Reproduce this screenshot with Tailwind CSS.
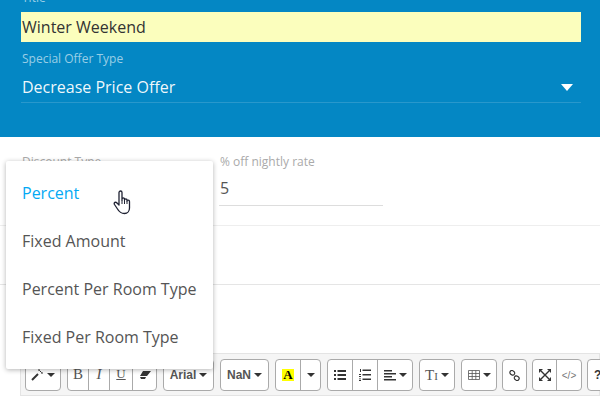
<!DOCTYPE html>
<html lang="en">
<head>
  <meta charset="UTF-8" />
  <script src="https://cdn.jsdelivr.net/npm/@tailwindcss/browser@4"></script>
  <title>Special Offer</title>
</head>
<body class="relative w-[600px] h-[400px] overflow-hidden bg-white font-['Open_Sans',sans-serif]">
  <!-- blue header -->
  <header class="h-[137px] bg-[#0487c4] pl-[21px] pr-[19px] overflow-hidden">
    <label class="block h-[12px] -mt-[12px] pl-[1px] text-[12px] leading-[20px] text-white/60">Title</label>
    <div class="h-[30px] mt-[12px] bg-[#fbfebd] pl-[1px] text-[16px] leading-[30px] text-[#333]">Winter Weekend</div>
    <label class="block mt-[8px] text-[12px] leading-[17px] text-white/60 pl-[1px]">Special Offer Type</label>
    <div class="flex items-center justify-between h-[36px] pt-[5px] pl-[1px] pr-[8px] border-b border-white/15 text-[16px] font-medium text-white/95">
      <span>Decrease Price Offer</span>
      <span class="w-0 h-0 mt-[1px] border-x-[6px] border-x-transparent border-t-[7px] border-t-white"></span>
    </div>
  </header>

  <!-- discount row -->
  <section class="flex h-[89px] border-b border-[#eee] pl-[22px] pt-[17px]">
    <div class="w-[197px] text-[12px] leading-[16px] text-[#aaa]">Discount Type</div>
    <div class="w-[164px]">
      <label class="block pl-[1px] text-[12px] leading-[16px] text-[#aaa]">% off nightly rate</label>
      <div class="h-[36px] pl-[1px] pt-[6px] border-b border-[#ddd] text-[16px] leading-[24px] text-[#555]">5</div>
    </div>
  </section>
  <div class="h-[59px] border-b border-[#e5e5e5]"></div>
  <div class="h-[68px]"></div>

  <!-- editor toolbar -->
  <div class="ml-[20px] h-[43px] bg-[#f5f5f5] border border-[#e4e4e4] flex *:shrink-0 pt-[5px] pl-[4px] text-[#333] font-['Liberation_Sans',sans-serif]">
    <div class="flex h-[32px] bg-white border border-[#aaa] rounded-[4px] w-[36px] items-center justify-center gap-[4px]">
      <svg width="12" height="12" viewBox="0 0 12 12"><path d="M1 11 L7 5" stroke="#333" stroke-width="2"/><path d="M8 0v2M10 4h2M8.500 1.500l2 2" stroke="#333" stroke-width="1" fill="none"/></svg>
      <span class="w-0 h-0 border-x-[4px] border-x-transparent border-t-[4px] border-t-[#333]"></span>
    </div>
    <div class="flex h-[32px] ml-[6px] bg-white border border-[#aaa] rounded-[4px] w-[90px] divide-x divide-[#aaa] text-center font-['Liberation_Serif',serif] text-[15px] leading-[28px] text-[#555]">
      <span class="w-[21px]">B</span>
      <span class="w-[21px] italic">I</span>
      <span class="w-[23px] underline text-[13px]">U</span>
      <span class="flex-1 flex items-center justify-center">
        <svg width="14" height="10" viewBox="0 0 14 10"><path d="M5 1h8L9 6H2zM2 7h6L7 9H3z" fill="#333"/></svg>
      </span>
    </div>
    <div class="flex h-[32px] ml-[6px] bg-white border border-[#aaa] rounded-[4px] w-[51px] items-center justify-center gap-[3px] text-[12px] font-bold text-[#555]">
      Arial<span class="w-0 h-0 border-x-[4px] border-x-transparent border-t-[4px] border-t-[#333]"></span>
    </div>
    <div class="flex h-[32px] ml-[6px] bg-white border border-[#aaa] rounded-[4px] w-[49px] items-center justify-center gap-[3px] text-[12px] font-bold text-[#555]">
      NaN<span class="w-0 h-0 border-x-[4px] border-x-transparent border-t-[4px] border-t-[#333]"></span>
    </div>
    <div class="flex h-[32px] ml-[6px] bg-white border border-[#aaa] rounded-[4px] w-[46px] divide-x divide-[#aaa]">
      <span class="w-[25px] flex items-center justify-center"><span class="w-[12px] h-[12px] bg-[#ff0] font-['Liberation_Serif',serif] font-bold text-[13px] leading-[12px] text-center text-black">A</span></span>
      <span class="flex-1 flex items-center justify-center"><span class="w-0 h-0 border-x-[4px] border-x-transparent border-t-[4px] border-t-[#333]"></span></span>
    </div>
    <div class="flex h-[32px] ml-[6px] bg-white border border-[#aaa] rounded-[4px] w-[86px] divide-x divide-[#aaa]">
      <span class="w-[25px] flex items-center justify-center">
        <svg width="12" height="10" viewBox="0 0 12 10" fill="#333"><path d="M0 0h2v2H0zM3.500 0H12v2H3.500zM0 4h2v2H0zM3.500 4H12v2H3.500zM0 8h2v2H0zM3.500 8H12v2H3.500z"/></svg>
      </span>
      <span class="w-[25px] flex items-center justify-center">
        <svg width="12" height="12" viewBox="0 0 12 12" fill="#333"><path d="M1 0h1v3H1zM0 5h2v1H0zM0 7h2v1H0zM0 9.500h2v.7H0zM0 11h2v1H0zM3.500 0.500H12v1.500H3.500zM3.500 5H12v1.500H3.500zM3.500 9.500H12V11H3.500z"/></svg>
      </span>
      <span class="flex-1 flex items-center justify-center gap-[3px]">
        <svg width="12" height="11" viewBox="0 0 12 11" fill="#333"><path d="M0 0h8v1.500H0zM0 3h12v1.500H0zM0 6h8v1.500H0zM0 9h12v1.500H0z"/></svg>
        <span class="w-0 h-0 border-x-[4px] border-x-transparent border-t-[4px] border-t-[#333]"></span>
      </span>
    </div>
    <div class="flex h-[32px] ml-[6px] bg-white border border-[#aaa] rounded-[4px] w-[36px] items-center justify-center gap-[3px]">
      <span class="font-['Liberation_Serif',serif] text-[15px] text-[#555]">T<span class="text-[11px]">I</span></span>
      <span class="w-0 h-0 border-x-[4px] border-x-transparent border-t-[4px] border-t-[#333]"></span>
    </div>
    <div class="flex h-[32px] ml-[6px] bg-white border border-[#aaa] rounded-[4px] w-[36px] items-center justify-center gap-[3px]">
      <svg width="12" height="10" viewBox="0 0 12 10" fill="none" stroke="#555" stroke-width=".8"><path d="M.5.500h11v9H.5zM.5 3.500h11M.5 6.500h11M4.200.500v9M7.800.500v9"/></svg>
      <span class="w-0 h-0 border-x-[4px] border-x-transparent border-t-[4px] border-t-[#333]"></span>
    </div>
    <div class="flex h-[32px] ml-[5px] bg-white border border-[#aaa] rounded-[4px] w-[25px] items-center justify-center">
      <svg width="11" height="11" viewBox="0 0 11 11" fill="none" stroke="#333" stroke-width="1.200"><rect x="0.800" y="0.800" width="5" height="4" rx="2" transform="rotate(35 3.300 2.800)"/><rect x="5.200" y="6.200" width="5" height="4" rx="2" transform="rotate(35 7.700 8.200)"/></svg>
    </div>
    <div class="flex h-[32px] ml-[5px] bg-white border border-[#aaa] rounded-[4px] w-[50px] divide-x divide-[#aaa]">
      <span class="w-[24px] flex items-center justify-center">
        <svg width="12" height="12" viewBox="0 0 12 12" fill="#333" stroke="#333"><path d="M0 0h4L0 4zM12 0H8l4 4zM0 12h4l-4-4zM12 12H8l4-4z" stroke="none"/><path d="M2 2l8 8M10 2l-8 8" stroke-width="1.400"/></svg>
      </span>
      <span class="flex-1 flex items-center justify-center text-[10px] text-[#777]">&lt;/&gt;</span>
    </div>
    <div class="flex h-[32px] ml-[5px] bg-white border border-[#aaa] rounded-[4px] w-[30px] pl-[6px] items-center text-[12px] font-bold text-[#333]">?</div>
  </div>

  <!-- open dropdown -->
  <ul class="absolute left-[6px] top-[161px] w-[207px] h-[208px] py-[8px] bg-white rounded-[2px] shadow-[0_1px_5px_rgba(0,0,0,0.3)] text-[16px] text-[#555]">
    <li class="h-[48px] pl-[16px] leading-[48px] text-[#03a9f4]">Percent</li>
    <li class="h-[48px] pl-[16px] leading-[48px]">Fixed Amount</li>
    <li class="h-[48px] pl-[16px] leading-[48px]">Percent Per Room Type</li>
    <li class="h-[48px] pl-[16px] leading-[48px]">Fixed Per Room Type</li>
  </ul>

  <!-- mouse pointer -->
  <svg class="absolute left-[113px] top-[189px]" width="22" height="26" viewBox="0 0 22 26">
    <path d="M6 3.500c0-2 3-2 3 0V11l0-1c0-1.500 2.500-1.500 2.500 0v1c0-1.500 2.500-1.500 2.500 0v1c0-1.300 2.500-1.300 2.500 0.500V19c0 3-2 5.500-5 5.500-3.500 0-5-1-7-4.500L1.500 15.500c-1-2 1-3 2.500-1.500L6 16z" fill="#fff" stroke="#1f2233" stroke-width="1.300" stroke-linejoin="round"/>
    <path d="M9 11v4M11.500 11v4M14 12v3" stroke="#1f2233" stroke-width="1"/>
  </svg>
</body>
</html>
